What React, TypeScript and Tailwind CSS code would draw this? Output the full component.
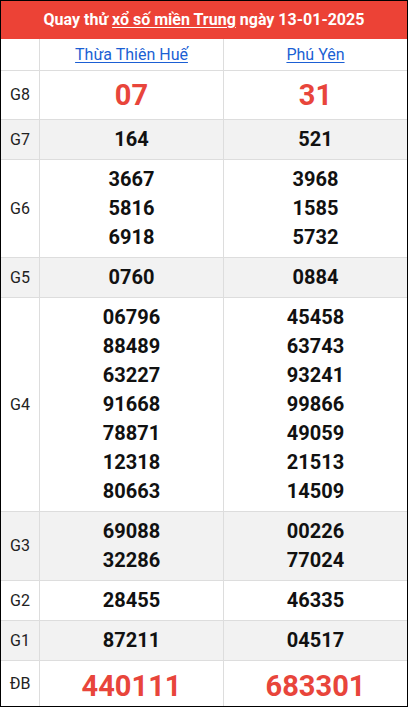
import React from "react";

type Row = { label: string; a: string[]; b: string[]; kind?: "g8" | "db" };

const rows: Row[] = [
  { label: "G8", a: ["07"], b: ["31"], kind: "g8" },
  { label: "G7", a: ["164"], b: ["521"] },
  { label: "G6", a: ["3667", "5816", "6918"], b: ["3968", "1585", "5732"] },
  { label: "G5", a: ["0760"], b: ["0884"] },
  {
    label: "G4",
    a: ["06796", "88489", "63227", "91668", "78871", "12318", "80663"],
    b: ["45458", "63743", "93241", "99866", "49059", "21513", "14509"],
  },
  { label: "G3", a: ["69088", "32286"], b: ["00226", "77024"] },
  { label: "G2", a: ["28455"], b: ["46335"] },
  { label: "G1", a: ["87211"], b: ["04517"] },
  { label: "ĐB", a: ["440111"], b: ["683301"], kind: "db" },
];

function Cell({ nums, kind }: { nums: string[]; kind?: Row["kind"] }) {
  return (
    <div
      className={`border-l border-[#dddddd] flex flex-col items-center justify-center ${
        kind === "db" ? "pt-[8px] pb-[2px]" : "py-[5px]"
      }`}
    >
      {nums.map((n) => (
        <span
          key={n}
          className={
            kind === "g8"
              ? "text-[29px] leading-[38px] font-bold text-[#e8453b]"
              : kind === "db"
              ? "text-[29px] leading-[35px] font-bold text-[#e8453b]"
              : "text-[20px] leading-[29px] font-bold text-[#111111]"
          }
        >
          {n}
        </span>
      ))}
    </div>
  );
}

export default function App() {
  return (
    <div
      className="w-[408px] h-[707px] border border-black bg-white"
      style={{ fontFamily: "Roboto, 'Liberation Sans', sans-serif" }}
    >
      <div className="h-[38px] bg-[#ec4236] flex items-center justify-center text-white font-bold text-[16px]">
        <span>
          Quay thử <span className="underline underline-offset-2">xổ số miền Trung</span> ngày 13-01-2025
        </span>
      </div>

      <div className="grid grid-cols-[38px_1fr_1fr] h-[31px]">
        <div />
        <div className="border-l border-[#dddddd] flex items-center justify-center">
          <span className="text-[16px] text-[#1b5fd4] underline underline-offset-2">Thừa Thiên Huế</span>
        </div>
        <div className="border-l border-[#dddddd] flex items-center justify-center">
          <span className="text-[16px] text-[#1b5fd4] underline underline-offset-2">Phú Yên</span>
        </div>
      </div>

      {rows.map((r, i) => (
        <div
          key={r.label}
          className={`grid grid-cols-[38px_1fr_1fr] border-t border-[#dddddd] ${
            i % 2 === 1 ? "bg-[#f2f2f2]" : "bg-white"
          }`}
        >
          <div className="flex items-center justify-center text-[16px] text-[#222222]">{r.label}</div>
          <Cell nums={r.a} kind={r.kind} />
          <Cell nums={r.b} kind={r.kind} />
        </div>
      ))}
    </div>
  );
}
